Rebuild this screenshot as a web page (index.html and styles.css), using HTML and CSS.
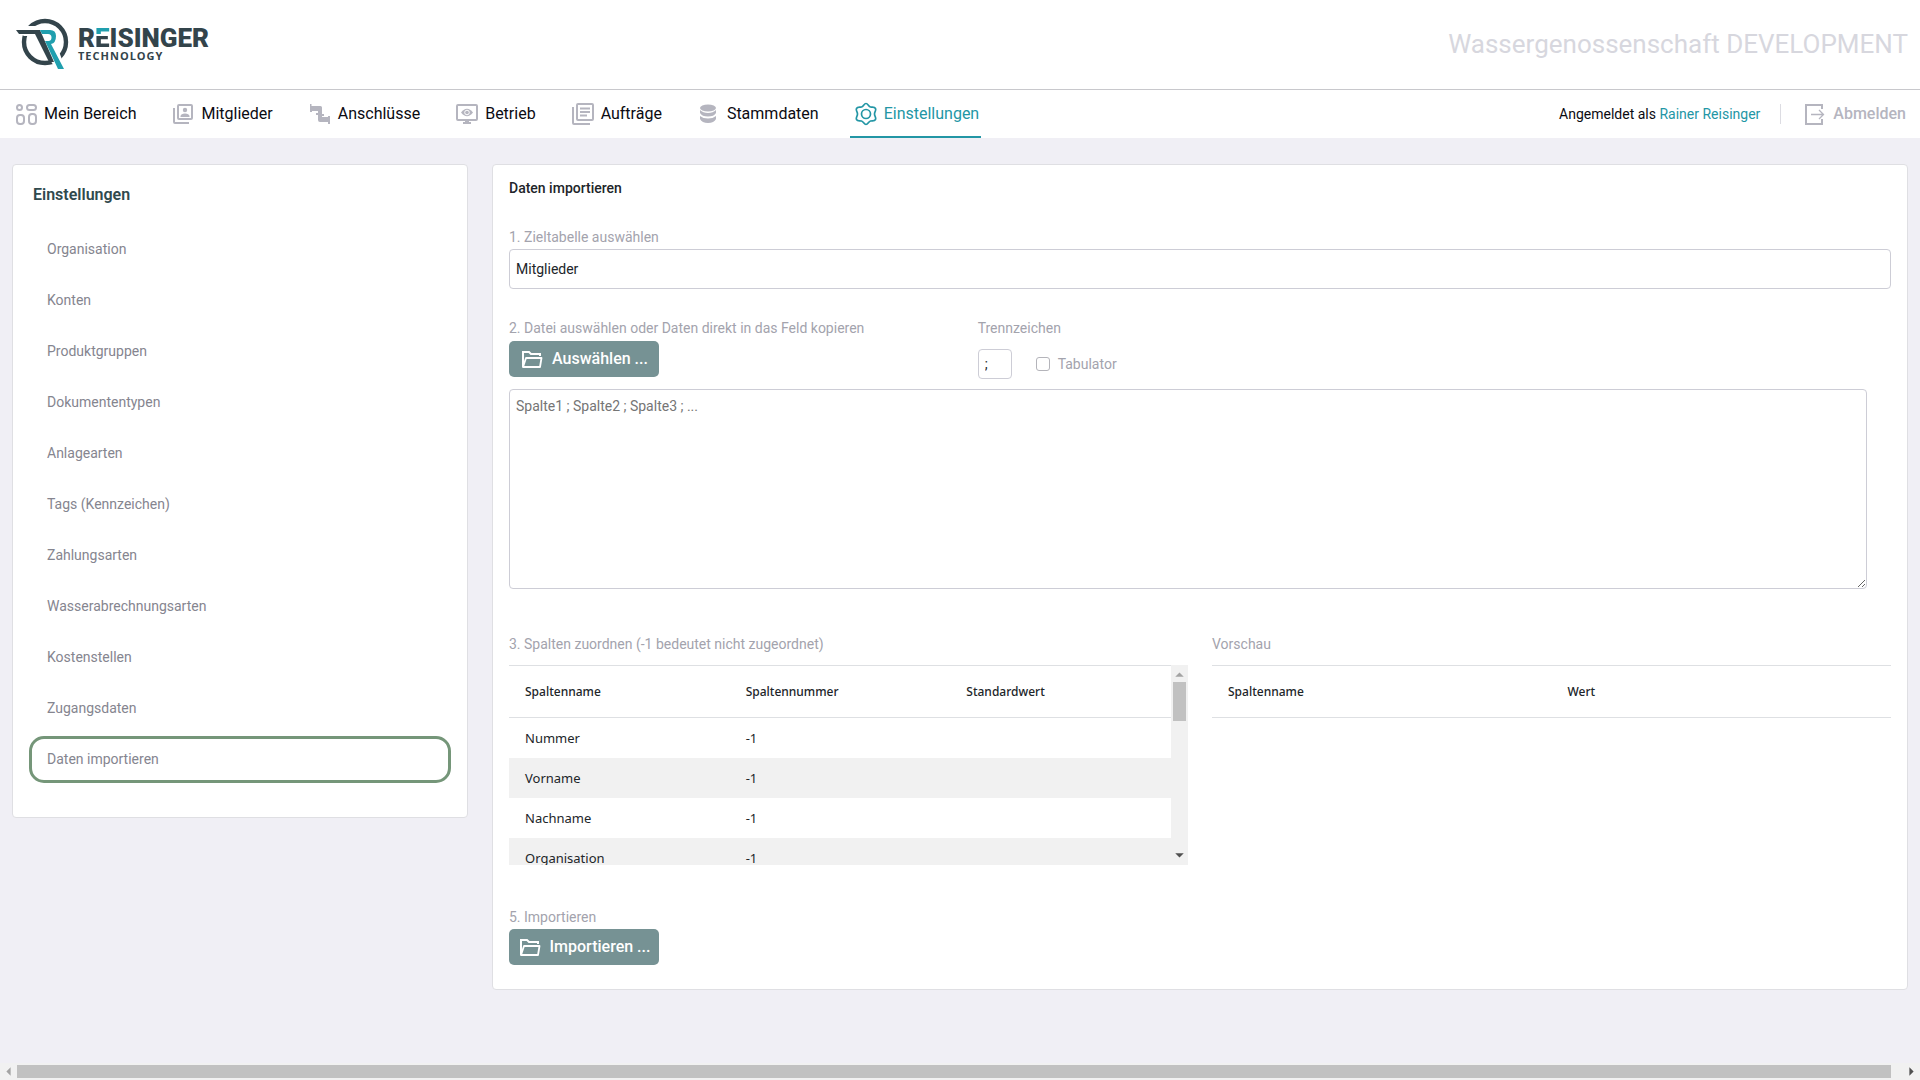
FILE: index.html
```html
<!DOCTYPE html>
<html lang="de">
<head>
<meta charset="utf-8">
<meta name="viewport" content="width=device-width, initial-scale=1">
<title>Daten importieren – Reisinger Technology</title>
<link rel="stylesheet" href="styles.css">
</head>
<body>
<header class="header">
  <a class="logo" href="#">
    <svg class="logo-mark" viewBox="0 0 54 54" aria-hidden="true">
      <circle cx="29" cy="25" r="21" fill="none" stroke="#33444b" stroke-width="4.400"/>
      <path d="M-1 9H24V19H8L-1 14Z" fill="#fff"/>
      <path d="M19 16H36L50 53H40Z" fill="#fff"/>
      <path d="M0 13H24L38 45H33L19 17H3Z" fill="#33444b"/>
      <path d="M24 13H34Q40 13 40 19Q40 26 35 27L48 52H42L29 24H33Q35.500 23.500 35.500 20.500Q35.500 17 32 17H26Z" fill="#209fae"/>
    </svg>
    <span class="logo-text">
      <span class="logo-name">R<span class="logo-accent">E</span>ISINGER</span>
      <span class="logo-sub">TECHNOLOGY</span>
    </span>
  </a>
  <div class="organisation">Wassergenossenschaft DEVELOPMENT</div>
</header>

<nav class="nav" aria-label="Hauptmenü">
  <ul class="nav-list">
    <li><a class="nav-item" href="#">
      <svg class="icon" viewBox="0 0 24 24"><g fill="none" stroke="currentColor" stroke-width="2"><rect x="3" y="3" width="5" height="5" rx="2.500"/><rect x="13" y="3" width="9" height="5" rx="2.500"/><rect x="3" y="13" width="7" height="9" rx="3"/><rect x="15" y="12" width="7" height="10" rx="3"/></g></svg>
      Mein Bereich</a></li>
    <li><a class="nav-item" href="#">
      <svg class="icon" viewBox="0 0 24 24"><g fill="none" stroke="currentColor" stroke-width="2"><rect x="7" y="3" width="14" height="14" rx="1"/><path d="M3 6V20Q3 21 4 21H18"/></g><circle cx="14" cy="8" r="2.200" fill="currentColor"/><path d="M9.500 15V14Q10 11.500 14 11.500T18.500 14V15Z" fill="currentColor"/></svg>
      Mitglieder</a></li>
    <li><a class="nav-item" href="#">
      <svg class="icon" viewBox="0 0 24 24"><path fill="currentColor" d="M2 2H3.500V4H12.500Q14 4 14 5.500V12H16V14H14V15H20V14H22V22H20V20H12Q10 20 10 18V13H8V11H10V9H4V10H2Z"/></svg>
      Anschlüsse</a></li>
    <li><a class="nav-item" href="#">
      <svg class="icon" viewBox="0 0 24 24"><rect x="2" y="3" width="20" height="15" rx="1" fill="none" stroke="currentColor" stroke-width="2"/><path d="M10 18H14V20H16V22H8V20H10Z" fill="currentColor"/><path d="M6 10.500Q12 3 18 10.500Q12 18 6 10.500Z" fill="currentColor"/><circle cx="12" cy="10.500" r="2.300" fill="currentColor" stroke="#fff"/></svg>
      Betrieb</a></li>
    <li><a class="nav-item" href="#">
      <svg class="icon" viewBox="0 0 24 24"><g fill="none" stroke="currentColor" stroke-width="2"><rect x="6" y="2" width="16" height="16" rx="1"/><path d="M2 5V21Q2 22 3 22H19"/><path d="M9 6.500H19M9 10H19M9 13.500H16"/></g></svg>
      Aufträge</a></li>
    <li><a class="nav-item" href="#">
      <svg class="icon" viewBox="0 0 24 24"><g fill="currentColor"><ellipse cx="11" cy="6" rx="8" ry="3.500"/><path d="M3 8Q6 11 11 11T19 8V11Q17 14.500 11 14.500T3 11Z"/><path d="M3 14Q6 16.500 11 16.500T19 14V17Q17 21 11 21T3 17Z"/></g></svg>
      Stammdaten</a></li>
    <li><a class="nav-item nav-item-active" href="#" aria-current="page">
      <svg class="icon" viewBox="0 0 24 24"><g fill="none" stroke="currentColor" stroke-width="1.700" stroke-linejoin="round"><circle cx="12" cy="12" r="4.500"/><path d="M12 1.500C14 1.500 14.500 4.500 16.500 5C18.500 5.500 20.500 4.500 21.500 6.500C22.500 8.500 20.500 9.500 20.500 12C20.500 14.500 22.500 15.500 21.500 17.500C20.500 19.500 18.500 18.500 16.500 19C14.500 19.500 14 22.500 12 22.500C10 22.500 9.500 19.500 7.500 19C5.500 18.500 3.500 19.500 2.500 17.500C1.500 15.500 3.500 14.500 3.500 12C3.500 9.500 1.500 8.500 2.500 6.500C3.500 4.500 5.500 5.500 7.500 5C9.500 4.500 10 1.500 12 1.500Z"/></g></svg>
      Einstellungen</a></li>
  </ul>
  <div class="account">
    <span class="account-user">Angemeldet als <a href="#">Rainer Reisinger</a></span>
    <a class="logout" href="#">
      <svg class="icon" viewBox="0 0 24 24"><path d="M19 7V3H3V22H19V17" fill="none" stroke="currentColor" stroke-width="2"/><path d="M8 12.500H20M16 8L20.500 12.500L16 17" fill="none" stroke="currentColor" stroke-width="1.300"/></svg>
      Abmelden</a>
  </div>
</nav>

<main class="main">
  <aside class="card sidebar">
    <h2 class="sidebar-title">Einstellungen</h2>
    <ul class="menu">
      <li><a class="menu-item" href="#">Organisation</a></li>
      <li><a class="menu-item" href="#">Konten</a></li>
      <li><a class="menu-item" href="#">Produktgruppen</a></li>
      <li><a class="menu-item" href="#">Dokumententypen</a></li>
      <li><a class="menu-item" href="#">Anlagearten</a></li>
      <li><a class="menu-item" href="#">Tags (Kennzeichen)</a></li>
      <li><a class="menu-item" href="#">Zahlungsarten</a></li>
      <li><a class="menu-item" href="#">Wasserabrechnungsarten</a></li>
      <li><a class="menu-item" href="#">Kostenstellen</a></li>
      <li><a class="menu-item" href="#">Zugangsdaten</a></li>
      <li><a class="menu-item menu-item-active" href="#" aria-current="page">Daten importieren</a></li>
    </ul>
  </aside>

  <form class="card import">
    <h1 class="import-title">Daten importieren</h1>

    <section class="field">
      <label class="label" for="target">1. Zieltabelle auswählen</label>
      <select class="control target" id="target"><option>Mitglieder</option></select>
    </section>

    <section class="source">
      <div class="field">
        <label class="label" for="data">2. Datei auswählen oder Daten direkt in das Feld kopieren</label>
        <button class="button" type="button">
          <svg class="icon" viewBox="0 0 24 24"><path d="M3 20V5H9L11 7H20V9" fill="none" stroke="currentColor" stroke-width="2"/><path d="M3 20L6 11H21.500L20 20Z" fill="none" stroke="currentColor" stroke-width="1.800" stroke-linejoin="round"/></svg>
          Auswählen ...</button>
      </div>
      <div class="field">
        <label class="label" for="separator">Trennzeichen</label>
        <div class="separator-row">
          <input class="control separator" id="separator" type="text" value=";">
          <label class="tab-option"><input class="checkbox" type="checkbox">Tabulator</label>
        </div>
      </div>
    </section>
    <textarea class="control data" id="data" placeholder="Spalte1 ; Spalte2 ; Spalte3 ; ..."></textarea>

    <section class="mapping">
      <div>
        <h2 class="label table-label">3. Spalten zuordnen (-1 bedeutet nicht zugeordnet)</h2>
        <div class="table-box">
          <div class="table-view">
            <table class="table">
              <thead><tr><th>Spaltenname</th><th>Spaltennummer</th><th>Standardwert</th></tr></thead>
              <tbody>
                <tr><td>Nummer</td><td>-1</td><td></td></tr>
                <tr><td>Vorname</td><td>-1</td><td></td></tr>
                <tr><td>Nachname</td><td>-1</td><td></td></tr>
                <tr><td>Organisation</td><td>-1</td><td></td></tr>
              </tbody>
            </table>
          </div>
          <div class="scroll-y" aria-hidden="true">
            <svg class="arrow" viewBox="0 0 16 16"><path d="M4 11L8 7L12 11Z" fill="#a3a3a3"/></svg>
            <span class="thumb-y"></span>
            <svg class="arrow arrow-end" viewBox="0 0 16 16"><path d="M4 5L8 9L12 5Z" fill="#505050"/></svg>
          </div>
        </div>
      </div>
      <div>
        <h2 class="label table-label">Vorschau</h2>
        <table class="table">
          <thead><tr><th>Spaltenname</th><th>Wert</th></tr></thead>
        </table>
      </div>
    </section>

    <section class="field">
      <h2 class="label">5. Importieren</h2>
      <button class="button" type="button">
        <svg class="icon" viewBox="0 0 24 24"><path d="M3 20V5H9L11 7H20V9" fill="none" stroke="currentColor" stroke-width="2"/><path d="M3 20L6 11H21.500L20 20Z" fill="none" stroke="currentColor" stroke-width="1.800" stroke-linejoin="round"/></svg>
        Importieren ...</button>
    </section>
  </form>
</main>

<div class="scroll-x" aria-hidden="true">
  <svg class="arrow" viewBox="0 0 16 16"><path d="M10 4L6 8L10 12Z" fill="#a3a3a3"/></svg>
  <span class="thumb-x"></span>
  <svg class="arrow" viewBox="0 0 16 16"><path d="M6 4L10 8L6 12Z" fill="#505050"/></svg>
</div>
</body>
</html>
```
FILE: styles.css
```css
* {
  box-sizing: border-box;
}

body {
  margin: 0;
  min-height: 100vh;
  display: flex;
  flex-direction: column;
  background: #f0eff5;
  color: #212529;
  font: 14px/20px Roboto, sans-serif;
}

a {
  color: inherit;
  text-decoration: none;
}

ul {
  margin: 0;
  padding: 0;
  list-style: none;
}

h1,
h2 {
  margin: 0;
}

.icon {
  flex: none;
  width: 24px;
  height: 24px;
}

/* Header */
.header {
  display: flex;
  align-items: center;
  justify-content: space-between;
  height: 90px;
  padding: 0 12px 2px 16px;
  background: #fff;
  border-bottom: 1px solid #c8c8cc;
}

.logo {
  display: flex;
  align-items: center;
  gap: 8px;
  color: #33444b;
}

.logo-mark {
  width: 54px;
  height: 54px;
}

.logo-text {
  display: flex;
  flex-direction: column;
}

.logo-name {
  font: 900 26px/24px Roboto, sans-serif;
}

.logo-accent {
  background: linear-gradient(#209fae 36%, #fff 36% 42%, #33444b 42%);
  background-clip: text;
  color: transparent;
}

.logo-sub {
  font: 700 11px/12px "Open Sans", sans-serif;
  letter-spacing: 1px;
}

.organisation {
  color: #d7d7de;
  font-size: 26px;
  line-height: 32px;
}

/* Navigation */
.nav {
  display: flex;
  justify-content: space-between;
  height: 48px;
  padding: 0 14px 0 10px;
  background: #fff;
}

.nav-list {
  display: flex;
  gap: 29px;
}

.nav-item {
  display: flex;
  align-items: center;
  gap: 6px;
  height: 48px;
  padding: 2px 2px 0 4px;
  border-bottom: 2px solid transparent;
  color: #0b0b12;
  font-size: 16px;
}

.nav-item .icon {
  color: #b5b5bf;
}

.nav-item-active,
.nav-item-active .icon {
  color: #2396a5;
}

.nav-item-active {
  border-color: #2396a5;
}

.account {
  display: flex;
  align-items: center;
  color: #0b0b12;
}

.account-user {
  padding-right: 20px;
  border-right: 1px solid #dcdce2;
}

.account-user a {
  color: #2396a5;
}

.logout {
  display: flex;
  align-items: center;
  gap: 6px;
  padding-left: 22px;
  color: #b5b5bf;
  font-size: 16px;
  font-weight: 500;
}

/* Page body */
.main {
  flex: 1;
  display: grid;
  grid-template-columns: repeat(4, 1fr);
  align-items: start;
  gap: 24px;
  padding: 26px 12px 24px;
}

.card {
  background: #fff;
  border: 1px solid #dfdfe3;
  border-radius: 4px;
}

.sidebar {
  padding: 20px 16px 34px;
}

.sidebar-title {
  padding-left: 4px;
  color: #30494d;
  font-size: 16px;
  font-weight: 600;
  line-height: 20px;
}

.menu {
  display: flex;
  flex-direction: column;
  gap: 4px;
  padding-top: 21px;
}

.menu-item {
  display: block;
  padding: 10px 15px;
  border: 3px solid transparent;
  border-radius: 15px;
  color: #85858f;
  line-height: 21px;
}

.menu-item-active {
  border-color: #759679;
}

/* Import form */
.import {
  grid-column: span 3;
  display: flex;
  flex-direction: column;
  padding: 13px 16px 24px;
}

.import-title {
  margin-bottom: 29px;
  font-size: 14px;
  font-weight: 500;
}

.field {
  display: flex;
  flex-direction: column;
  align-items: flex-start;
}

.label {
  margin-bottom: 2px;
  color: #a3a3ad;
  font-size: 14px;
  font-weight: 400;
}

.control {
  border: 1px solid #cdcdd6;
  border-radius: 4px;
  background: #fff;
  color: #212529;
  font: 14px/20px Roboto, sans-serif;
}

.target {
  width: 100%;
  height: 40px;
  padding: 0 6px;
  appearance: none;
}

.source {
  display: grid;
  grid-template-columns: repeat(3, 1fr);
  gap: 24px;
  margin: 29px 0 10px;
}

.source .label {
  margin-bottom: 3px;
}

.button {
  display: flex;
  align-items: center;
  justify-content: center;
  gap: 8px;
  width: 150px;
  height: 36px;
  padding: 0;
  border: 0;
  border-radius: 5px;
  background: #769294;
  color: #fff;
  font: 500 16px/20px Roboto, sans-serif;
}

.separator-row {
  display: flex;
  align-items: center;
  gap: 24px;
  padding-top: 8px;
}

.separator {
  width: 34px;
  height: 30px;
  padding: 0 6px;
}

.tab-option {
  display: flex;
  align-items: center;
  gap: 8px;
  color: #a3a3ad;
}

.checkbox {
  appearance: none;
  width: 14px;
  height: 14px;
  margin: 0;
  border: 1px solid #b4b4ba;
  border-radius: 3px;
}

.data {
  width: calc(100% - 24px);
  height: 200px;
  padding: 6px;
}

.data::placeholder {
  color: #757575;
}

/* Column mapping */
.mapping {
  display: grid;
  grid-template-columns: repeat(2, 1fr);
  gap: 24px;
  margin: 45px 0 42px;
}

.table-label {
  margin-bottom: 11px;
}

.table-box {
  display: flex;
  height: 200px;
}

.table-view {
  flex: 1;
  overflow: hidden;
}

.table {
  width: 100%;
  table-layout: fixed;
  border-collapse: collapse;
  font: 13px/20px "Noto Sans", sans-serif;
}

.table th,
.table td {
  height: 40px;
  padding: 0 16px;
  text-align: left;
}

.table th {
  height: 52px;
  border: solid #dee0e3;
  border-width: 1px 0;
  font-size: 12px;
  font-weight: 500;
}

.table tbody tr:nth-child(even) {
  background: #f1f1f1;
}

/* Scrollbars */
.scroll-y {
  display: flex;
  flex-direction: column;
  align-items: center;
  width: 17px;
  background: #f1f1f1;
}

.thumb-y {
  width: 13px;
  height: 39px;
  background: #c1c1c1;
}

.arrow {
  flex: none;
  width: 17px;
  height: 17px;
}

.arrow-end {
  margin-top: auto;
}

.scroll-x {
  display: flex;
  align-items: center;
  height: 17px;
  background: #f1f1f1;
}

.thumb-x {
  flex: 1;
  height: 13px;
  margin-right: 12px;
  background: #c1c1c1;
}
```
